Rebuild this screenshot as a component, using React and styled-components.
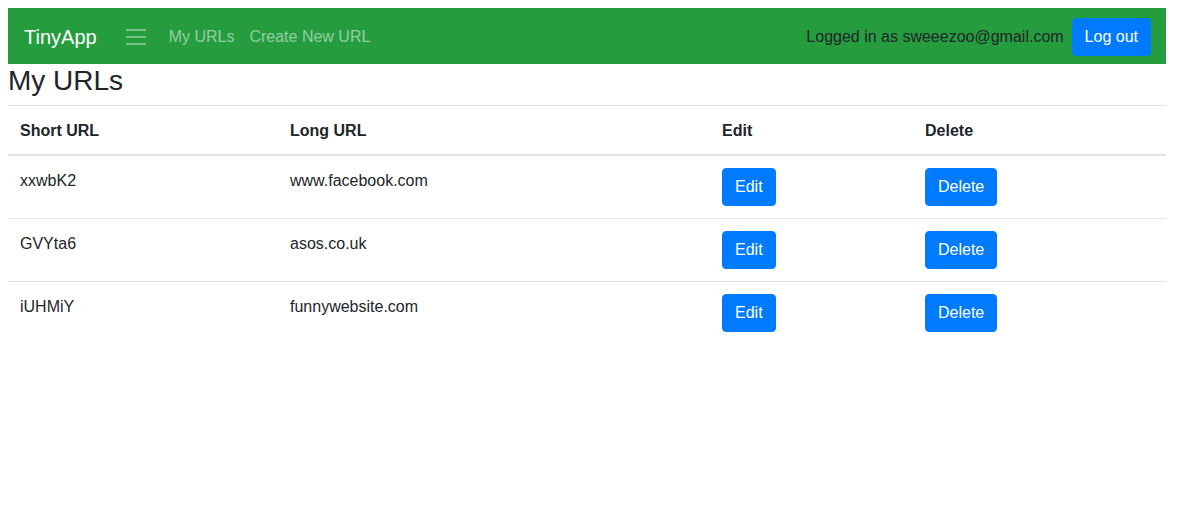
import React from 'react';
import styled, { createGlobalStyle } from 'styled-components';

const GlobalStyle = createGlobalStyle`
    body {
        margin: 8px 14px 8px 8px;
        font-family: "Liberation Sans", Arial, sans-serif;
        font-size: 16px;
        line-height: 1.5;
        color: #212529;
        background: #fff;
    }
    * { box-sizing: border-box; }
`;

// --- Navbar ---
const Navbar = styled.nav`
    display: flex;
    align-items: center;
    height: 56px;
    padding: 1px 15px 0 16px;
    background-color: #259d3f;
`;

const Brand = styled.a`
    font-size: 20px;
    line-height: 30px;
    color: #fff;
    text-decoration: none;
    margin-right: 29px;
`;

const Toggler = styled.button`
    display: flex;
    align-items: center;
    padding: 0;
    border: none;
    background: transparent;
    margin-right: 23px;
    cursor: pointer;
`;

const NavLinks = styled.div`
    display: flex;
    gap: 15px;
`;

const NavLink = styled.a`
    color: rgba(255, 255, 255, 0.5);
    text-decoration: none;
    font-size: 16px;
`;

const NavRight = styled.div`
    margin-left: auto;
    display: flex;
    align-items: center;
    gap: 8px;
`;

const UserText = styled.span`
    color: #212529;
`;

const Button = styled.button`
    font-family: inherit;
    font-size: 16px;
    line-height: 24px;
    padding: 6px 12px;
    border: 1px solid #007bff;
    border-radius: 4px;
    background-color: #007bff;
    color: #fff;
    cursor: pointer;
`;

// --- Content ---
const Title = styled.h3`
    margin: 0 0 7px;
    font-size: 28px;
    font-weight: 500;
    line-height: 1.2;
`;

const Table = styled.table`
    width: 100%;
    border-collapse: collapse;
`;

const Th = styled.th`
    width: ${({ w }) => w}px;
    text-align: left;
    vertical-align: bottom;
    padding: 13px 12px 11px;
    border-top: 1px solid #dee2e6;
    border-bottom: 2px solid #dee2e6;
    font-weight: 700;
`;

const Td = styled.td`
    vertical-align: top;
    padding: 12px;
    border-top: 1px solid #dee2e6;
`;

const CellText = styled.span`
    display: block;
    padding-top: 1px;
`;

const MenuIcon = () => (
    <svg width="20" height="16" viewBox="0 0 20 16">
        <path d="M0 1h20M0 8h20M0 15h20" stroke="rgba(255,255,255,0.5)" strokeWidth="1.6" />
    </svg>
);

const urls = [
    { short: 'xxwbK2', long: 'www.facebook.com' },
    { short: 'GVYta6', long: 'asos.co.uk' },
    { short: 'iUHMiY', long: 'funnywebsite.com' },
];

const App = () => (
    <>
        <GlobalStyle />
        <Navbar>
            <Brand href="#">TinyApp</Brand>
            <Toggler type="button" aria-label="Toggle navigation">
                <MenuIcon />
            </Toggler>
            <NavLinks>
                <NavLink href="#">My URLs</NavLink>
                <NavLink href="#">Create New URL</NavLink>
            </NavLinks>
            <NavRight>
                <UserText>Logged in as sweeezoo@gmail.com</UserText>
                <Button type="button">Log out</Button>
            </NavRight>
        </Navbar>
        <Title>My URLs</Title>
        <Table>
            <thead>
                <tr>
                    <Th w={270}>Short URL</Th>
                    <Th w={432}>Long URL</Th>
                    <Th w={203}>Edit</Th>
                    <Th>Delete</Th>
                </tr>
            </thead>
            <tbody>
                {urls.map(url => (
                    <tr key={url.short}>
                        <Td><CellText>{url.short}</CellText></Td>
                        <Td><CellText>{url.long}</CellText></Td>
                        <Td><Button type="button">Edit</Button></Td>
                        <Td><Button type="button">Delete</Button></Td>
                    </tr>
                ))}
            </tbody>
        </Table>
    </>
);

export default App;
